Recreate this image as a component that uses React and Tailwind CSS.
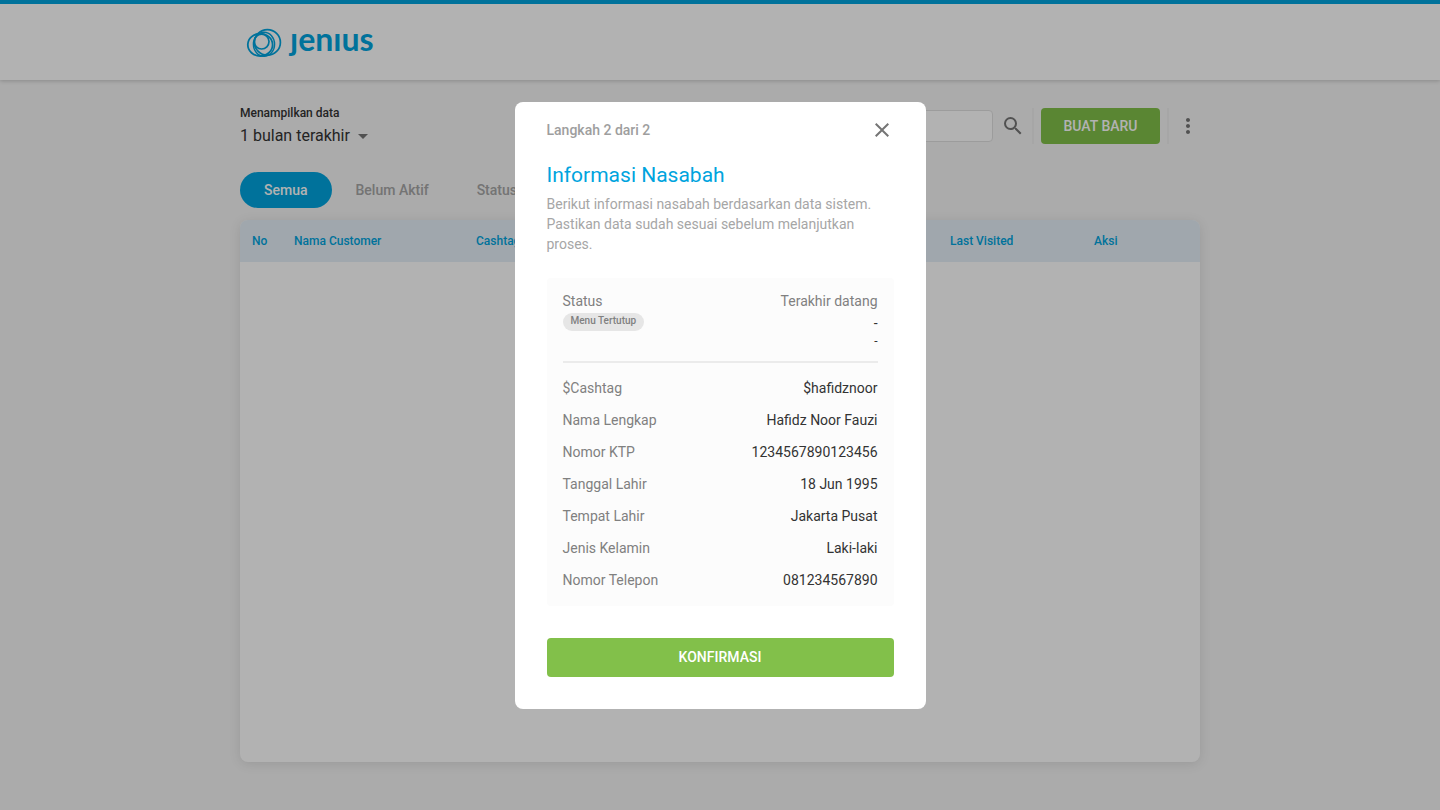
import React, { useState } from 'react';
import {
  MdArrowDropDown,
  MdClose,
  MdMoreVert,
  MdSearch,
} from 'react-icons/md';

const tabs = ['Semua', 'Belum Aktif', 'Status'];

const columns = [
  { label: 'No', width: 'w-[42px]' },
  { label: 'Nama Customer', width: 'w-[182px]' },
  { label: 'Cashtag', width: '' },
  { label: 'Last Visited', width: 'w-36' },
  { label: 'Aksi', width: 'w-[118px]' },
];

const customer = [
  { label: '$Cashtag', value: '$hafidznoor' },
  { label: 'Nama Lengkap', value: 'Hafidz Noor Fauzi' },
  { label: 'Nomor KTP', value: '1234567890123456' },
  { label: 'Tanggal Lahir', value: '18 Jun 1995' },
  { label: 'Tempat Lahir', value: 'Jakarta Pusat' },
  { label: 'Jenis Kelamin', value: 'Laki-laki' },
  { label: 'Nomor Telepon', value: '081234567890' },
];

const Logo = () => (
  <a
    href="#"
    aria-label="Jenius"
    className="flex items-center gap-2 text-[#00a4de]"
  >
    <svg
      width="36"
      height="32"
      viewBox="0 0 36 32"
      fill="none"
      stroke="currentColor"
      aria-hidden="true"
    >
      <ellipse cx="21.4" cy="16.4" rx="13" ry="12.8" strokeWidth="1.7" />
      <ellipse cx="14.2" cy="18.8" rx="12.4" ry="11.2" strokeWidth="1.8" />
      <ellipse cx="18" cy="18.2" rx="10.6" ry="12" strokeWidth="1.4" />
      <circle cx="15.6" cy="15.6" r="7.4" strokeWidth="1.7" />
    </svg>
    <span className="pb-1.5 font-[Lato,sans-serif] text-[32px] leading-8 font-bold">
      ȷenıus
    </span>
  </a>
);

const Toolbar = ({ period, onPeriodChange }) => (
  <div className="flex items-start justify-between">
    <div>
      <label
        htmlFor="period"
        className="block text-xs leading-4 font-medium text-[#333333]"
      >
        Menampilkan data
      </label>
      <div className="mt-px grid w-[135px] items-center">
        <select
          id="period"
          value={period}
          onChange={onPeriodChange}
          className="col-start-1 row-start-1 h-7 w-full appearance-none bg-transparent text-base text-[#333333]"
        >
          <option>1 bulan terakhir</option>
        </select>
        <MdArrowDropDown className="pointer-events-none col-start-1 row-start-1 size-6 justify-self-end text-[#757575]" />
      </div>
    </div>
    <div className="flex items-center gap-2 pt-[3px]">
      <input
        type="text"
        aria-label="Cari"
        className="h-8 w-[250px] rounded border border-[#e0e0e0] bg-white px-2 text-sm"
      />
      <button type="button" aria-label="Cari" className="text-[#757575]">
        <MdSearch className="size-6" />
      </button>
      <div className="-mx-px h-9 w-0.5 bg-[#eeeeee]" />
      <button
        type="button"
        className="h-9 w-[119px] rounded bg-[#82c04a] text-sm font-medium text-white"
      >
        BUAT BARU
      </button>
      <div className="-mx-px h-9 w-0.5 bg-[#eeeeee]" />
      <button type="button" aria-label="Menu" className="text-[#757575]">
        <MdMoreVert className="size-6" />
      </button>
    </div>
  </div>
);

const CustomerModal = ({ onClose }) => (
  <div className="fixed inset-0 flex items-center justify-center bg-black/30">
    <div
      role="dialog"
      aria-modal="true"
      aria-labelledby="modal-title"
      className="w-full max-w-[411px] rounded-lg bg-white px-8 pt-4 pb-8"
    >
      <div className="flex items-center justify-between">
        <span className="text-sm font-medium text-[#9e9e9e]">
          Langkah 2 dari 2
        </span>
        <button
          type="button"
          aria-label="Tutup"
          onClick={onClose}
          className="text-[#757575]"
        >
          <MdClose className="size-6" />
        </button>
      </div>
      <h2
        id="modal-title"
        className="mt-[19px] text-[21px] leading-7 text-[#00a4de]"
      >
        Informasi Nasabah
      </h2>
      <p className="mt-[5px] text-sm text-[#a6a6a6]">
        Berikut informasi nasabah berdasarkan data sistem. Pastikan data sudah
        sesuai sebelum melanjutkan proses.
      </p>
      <div className="mt-6 rounded bg-[#fcfcfc] px-4 pt-[13px] pb-4 text-sm">
        <div className="flex justify-between border-b-2 border-[#ebebeb] pb-3">
          <div className="text-[#808080]">
            <p>Status</p>
            <span className="mt-0.5 flex h-[18px] items-center rounded-full bg-[#e6e6e6] px-2 text-[10px] font-medium">
              Menu Tertutup
            </span>
          </div>
          <div className="text-right text-[#333333]">
            <p className="text-[#808080]">Terakhir datang</p>
            <p className="mt-0.5">-</p>
            <p className="text-xs">-</p>
          </div>
        </div>
        <dl className="mt-[15px] space-y-3">
          {customer.map(({ label, value }) => (
            <div key={label} className="flex justify-between">
              <dt className="text-[#808080]">{label}</dt>
              <dd className="text-[#333333]">{value}</dd>
            </div>
          ))}
        </dl>
      </div>
      <button
        type="button"
        onClick={onClose}
        className="mt-8 h-[39px] w-full rounded bg-[#82c04a] text-sm font-medium text-white"
      >
        KONFIRMASI
      </button>
    </div>
  </div>
);

const App = () => {
  const [period, setPeriod] = useState('1 bulan terakhir');
  const [activeTab, setActiveTab] = useState('Semua');
  const [open, setOpen] = useState(true);

  return (
    <div className="min-h-screen bg-[#f5f5f5] pb-12 font-[Roboto,sans-serif]">
      <header className="border-t-4 border-[#00a4de] bg-white shadow-[0_1px_4px_rgba(0,0,0,0.2)]">
        <div className="mx-auto flex h-[76px] max-w-[960px] items-center px-1.5">
          <Logo />
        </div>
      </header>
      <main className="mx-auto max-w-[960px] pt-[25px]">
        <Toolbar
          period={period}
          onPeriodChange={(e) => setPeriod(e.target.value)}
        />
        <div className="mt-[22px] flex">
          {tabs.map((tab) => (
            <button
              key={tab}
              type="button"
              onClick={() => setActiveTab(tab)}
              className={`h-9 rounded-full px-6 text-sm font-medium ${
                activeTab === tab
                  ? 'bg-[#00a4de] text-white'
                  : 'text-[#a6a6a6]'
              }`}
            >
              {tab}
            </button>
          ))}
        </div>
        <div className="mt-3 min-h-[542px] overflow-hidden rounded-lg bg-white shadow-[0_2px_12px_rgba(0,0,0,0.1)]">
          <table className="w-full table-fixed text-left text-xs text-[#00a4de]">
            <thead className="bg-[#e6f0f8]">
              <tr>
                {columns.map(({ label, width }) => (
                  <th
                    key={label}
                    className={`h-[42px] pl-3 font-medium ${width}`}
                  >
                    {label}
                  </th>
                ))}
              </tr>
            </thead>
          </table>
        </div>
      </main>
      {open && <CustomerModal onClose={() => setOpen(false)} />}
    </div>
  );
};

export default App;
